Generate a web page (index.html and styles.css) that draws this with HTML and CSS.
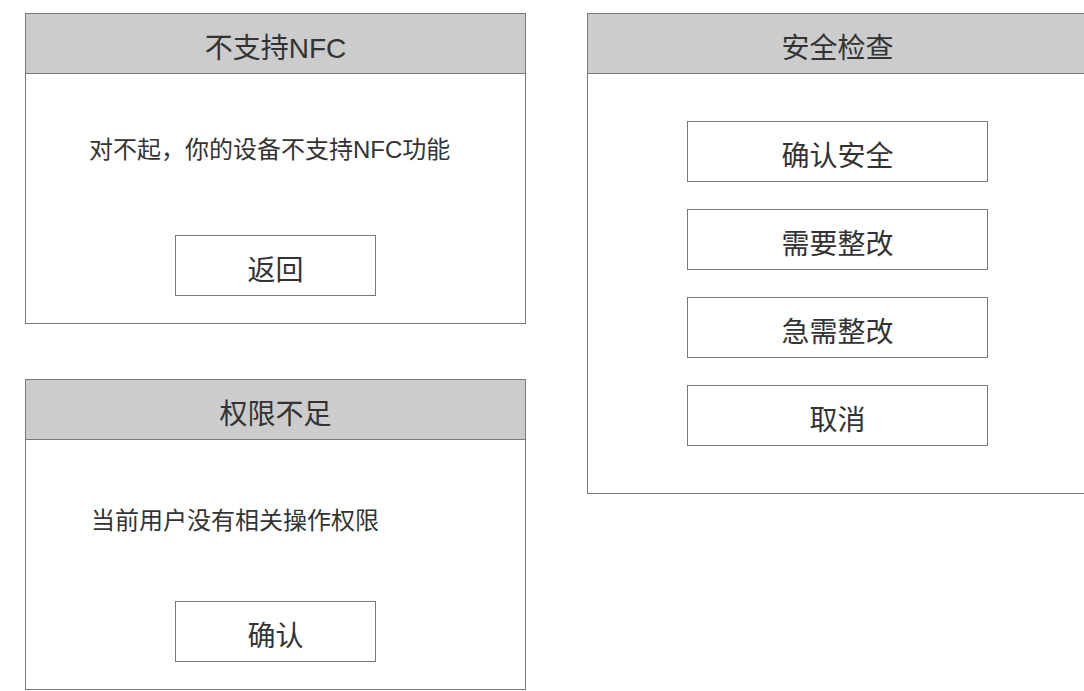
FILE: index.html
```html
<!DOCTYPE html>
<html lang="zh-CN">
<head>
<meta charset="utf-8">
<title>对话框</title>
<link rel="stylesheet" href="styles.css">
</head>
<body>
<div class="page">
  <div class="col-left">
    <section class="panel panel-small">
      <div class="panel-header">不支持NFC</div>
      <div class="panel-body">
        <p class="msg msg-nfc">对不起，你的设备不支持NFC功能</p>
        <div class="btn btn-small">返回</div>
      </div>
    </section>
    <section class="panel panel-small">
      <div class="panel-header">权限不足</div>
      <div class="panel-body">
        <p class="msg msg-perm">当前用户没有相关操作权限</p>
        <div class="btn btn-small">确认</div>
      </div>
    </section>
  </div>
  <section class="panel panel-large">
    <div class="panel-header">安全检查</div>
    <div class="panel-body panel-body-list">
      <div class="btn btn-wide">确认安全</div>
      <div class="btn btn-wide">需要整改</div>
      <div class="btn btn-wide">急需整改</div>
      <div class="btn btn-wide">取消</div>
    </div>
  </section>
</div>
</body>
</html>
```

FILE: styles.css
```css
html, body {
  margin: 0;
  padding: 0;
  overflow: hidden;
  background: #ffffff;
}

body {
  font-family: "Liberation Sans", "Noto Sans CJK SC", sans-serif;
  color: #333333;
}

.page {
  box-sizing: border-box;
  display: flex;
  align-items: flex-start;
  gap: 61px;
  padding: 13px 0 0 25px;
  width: 100vw;
  height: 100vh;
  overflow: hidden;
}

.col-left {
  display: flex;
  flex-direction: column;
  gap: 55px;
  flex: 0 0 501px;
}

.panel {
  box-sizing: border-box;
  width: 501px;
  border: 1px solid #797979;
  background: #ffffff;
  display: flex;
  flex-direction: column;
  flex: 0 0 auto;
}

.panel-small {
  height: 311px;
}

.panel-large {
  height: 481px;
}

.panel-header {
  box-sizing: border-box;
  height: 60px;
  background: #cccccc;
  border-bottom: 1px solid #797979;
  padding-top: 10px;
  line-height: 49px;
  font-size: 28px;
  text-align: center;
  flex: 0 0 auto;
}

.panel-body {
  flex: 1 1 auto;
  display: flex;
  flex-direction: column;
}

.msg {
  margin: 0;
  font-size: 24px;
  line-height: 32px;
  white-space: nowrap;
}

.msg-nfc {
  padding: 60px 0 0 63px;
}

.msg-perm {
  padding: 65px 0 0 65px;
}

.btn {
  box-sizing: border-box;
  height: 61px;
  border: 1px solid #797979;
  background: #ffffff;
  padding-top: 10px;
  line-height: 49px;
  font-size: 28px;
  text-align: center;
  align-self: center;
}

.btn-small {
  width: 201px;
  margin-top: auto;
  margin-bottom: 27px;
}

.panel-body-list {
  padding-top: 47px;
  gap: 27px;
}

.btn-wide {
  width: 301px;
}
```
